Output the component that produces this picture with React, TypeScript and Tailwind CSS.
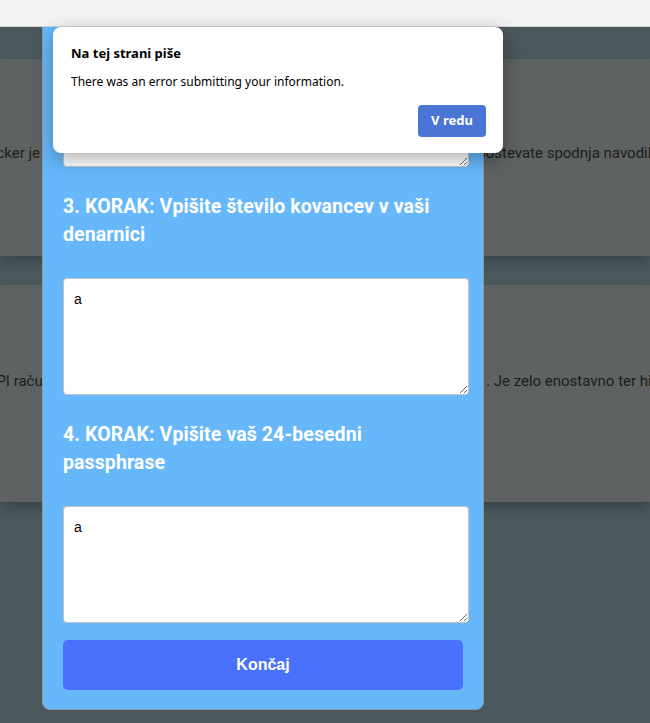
import React from "react";

const bgText = "font-['Roboto',sans-serif] text-[15px] leading-[24px] text-[#1b1d1d]";

// Textarea + heading for one step of the form.
const Step = ({ title, first }: { title: string; first?: boolean }) => (
  <>
    <h2
      className={`${first ? "mt-[20px]" : "mt-[26px]"} mb-[29px] font-['Roboto',sans-serif] text-[19.5px] font-bold leading-[28px] tracking-[0.1px] text-white`}
    >
      {title}
    </h2>
    <textarea
      defaultValue="a"
      className="block h-[117px] w-[406px] resize-y rounded-[4px] border border-[#c4c4c4] bg-white px-[10px] py-[11px] font-['Liberation_Sans',sans-serif] text-[14px] leading-[18px] text-black outline-none"
    />
  </>
);

const App = () => {
  return (
    <div className="relative flex h-[723px] w-[650px] flex-col overflow-hidden bg-[#4b585c]">
      {/* Browser bar */}
      <div className="h-[27px] shrink-0 border-b border-[#d2d2d2] bg-[#f3f3f3]" />

      <div className="relative flex-1 overflow-hidden">
        {/* Page behind the overlay */}
        <div className="flex flex-col gap-[29px] pt-[32px]">
          <div className="h-[197px] bg-[#5f6262] pt-[82px] shadow-[0_6px_12px_rgba(0,0,0,0.22)]">
            <div className={`flex ${bgText}`}>
              <div className="w-[484px] shrink-0">
                <div className="flex w-[44px] justify-end overflow-hidden whitespace-nowrap pr-[4px]">
                  Pi Network Locker je
                </div>
              </div>
              <div className="min-w-0 flex-1 overflow-hidden whitespace-nowrap">
                <span className="-ml-[15px]">upostevate spodnja navodila.</span>
              </div>
            </div>
          </div>
          <div className="h-[217px] bg-[#5f6262] pt-[84px] shadow-[0_6px_12px_rgba(0,0,0,0.22)]">
            <div className={`flex ${bgText}`}>
              <div className="w-[484px] shrink-0">
                <div className="flex w-[51px] justify-end overflow-hidden whitespace-nowrap">
                  Odklenite svoj PI račun
                </div>
              </div>
              <div className="min-w-0 flex-1 overflow-hidden whitespace-nowrap pl-[2px]">
                . Je zelo enostavno ter hitro.
              </div>
            </div>
          </div>
        </div>

        {/* Modal panel */}
        <div className="absolute inset-0 flex flex-col items-start justify-end pb-[13px] pl-[42px]">
          <div className="w-[442px] shrink-0 rounded-[8px] border border-[#8c9aa4] bg-[#66b8fb] px-[20px] pb-[19px]">
            <Step first title="2. KORAK: Vpišite vaš PI naslov denarnice" />
            <Step title="3. KORAK: Vpišite število kovancev v vaši denarnici" />
            <Step title="4. KORAK: Vpišite vaš 24-besedni passphrase" />
            <button className="mt-[17px] block h-[50px] w-full rounded-[5px] bg-[#4a70fe] font-['Liberation_Sans',sans-serif] text-[16px] font-bold text-white">
              Končaj
            </button>
          </div>
        </div>
      </div>

      {/* Browser alert */}
      <div className="absolute left-[53px] top-[27px] flex h-[126px] w-[450px] flex-col rounded-[8px] bg-white pb-[16px] pl-[18px] pr-[17px] pt-[16px] font-['Noto_Sans',sans-serif] text-black shadow-[0_6px_20px_rgba(0,0,0,0.32)]">
        <div className="text-[13px] font-bold leading-[20px]">Na tej strani piše</div>
        <div className="mt-[10px] text-[12px] leading-[18px]">
          There was an error submitting your information.
        </div>
        <div className="mt-auto flex justify-end">
          <button className="h-[32px] w-[68px] rounded-[4px] bg-[#4a75d5] text-[13px] font-bold text-white">
            V redu
          </button>
        </div>
      </div>
    </div>
  );
};

export default App;
